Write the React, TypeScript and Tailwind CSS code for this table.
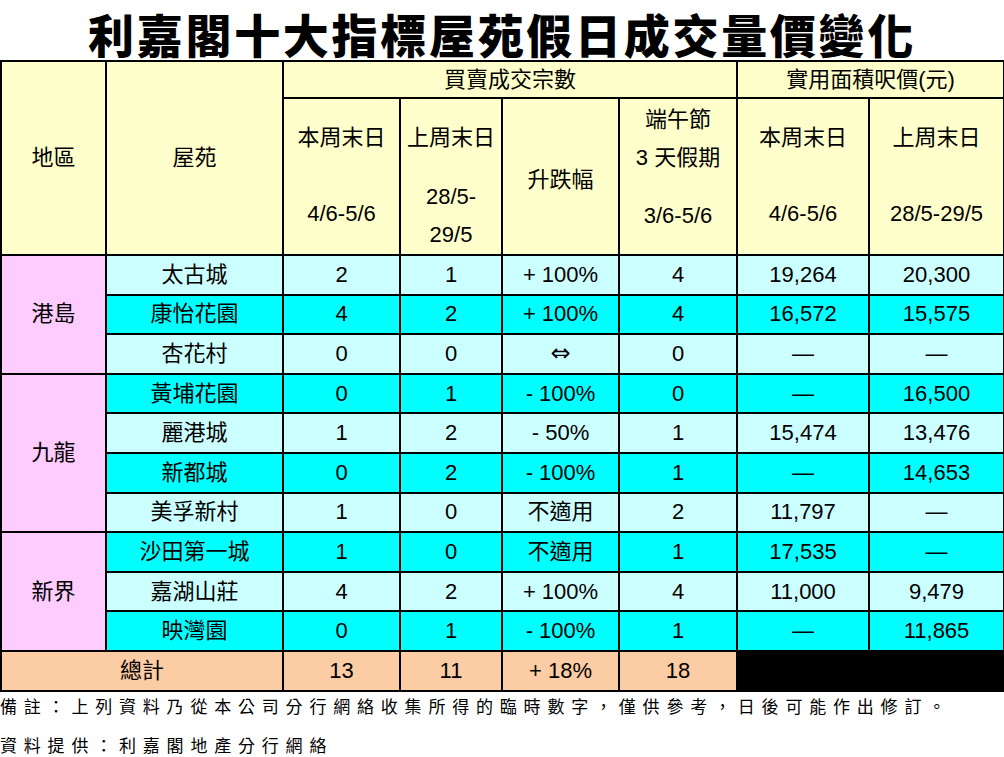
import React from 'react';

type Row = {
  name: string;
  thisWeek: string;
  lastWeek: string;
  change: string;
  holiday: string;
  priceNow: string;
  pricePrev: string;
};

type Region = {
  region: string;
  rows: Row[];
};

const regions: Region[] = [
  {
    region: '港島',
    rows: [
      { name: '太古城', thisWeek: '2', lastWeek: '1', change: '+ 100%', holiday: '4', priceNow: '19,264', pricePrev: '20,300' },
      { name: '康怡花園', thisWeek: '4', lastWeek: '2', change: '+ 100%', holiday: '4', priceNow: '16,572', pricePrev: '15,575' },
      { name: '杏花村', thisWeek: '0', lastWeek: '0', change: '⇔', holiday: '0', priceNow: '—', pricePrev: '—' },
    ],
  },
  {
    region: '九龍',
    rows: [
      { name: '黃埔花園', thisWeek: '0', lastWeek: '1', change: '- 100%', holiday: '0', priceNow: '—', pricePrev: '16,500' },
      { name: '麗港城', thisWeek: '1', lastWeek: '2', change: '- 50%', holiday: '1', priceNow: '15,474', pricePrev: '13,476' },
      { name: '新都城', thisWeek: '0', lastWeek: '2', change: '- 100%', holiday: '1', priceNow: '—', pricePrev: '14,653' },
      { name: '美孚新村', thisWeek: '1', lastWeek: '0', change: '不適用', holiday: '2', priceNow: '11,797', pricePrev: '—' },
    ],
  },
  {
    region: '新界',
    rows: [
      { name: '沙田第一城', thisWeek: '1', lastWeek: '0', change: '不適用', holiday: '1', priceNow: '17,535', pricePrev: '—' },
      { name: '嘉湖山莊', thisWeek: '4', lastWeek: '2', change: '+ 100%', holiday: '4', priceNow: '11,000', pricePrev: '9,479' },
      { name: '映灣園', thisWeek: '0', lastWeek: '1', change: '- 100%', holiday: '1', priceNow: '—', pricePrev: '11,865' },
    ],
  },
];

const cell = 'border-2 border-black text-center align-middle p-0';
const font = { fontFamily: '"Liberation Sans", "Noto Sans CJK TC", sans-serif' };

const ChangeText = ({ value }: { value: string }) =>
  value === '⇔' ? (
    <span className="text-[24px]" style={{ fontFamily: '"DejaVu Sans", sans-serif' }}>⇔</span>
  ) : (
    <>{value}</>
  );

const App = () => {
  let rowIndex = 0;

  return (
    <div className="w-[1004px] h-[757px] bg-white text-black overflow-hidden" style={font}>
      {/* Title */}
      <div
        className="h-[60px] text-center text-[46px] font-black leading-[66px] tracking-[2.7px] whitespace-nowrap"
        style={{ fontFamily: '"Noto Sans CJK TC", sans-serif' }}
      >
        利嘉閣十大指標屋苑假日成交量價變化
      </div>

      <table className="table-fixed border-collapse w-[1003px] text-[22px] leading-[34px]">
        <colgroup>
          <col className="w-[105px]" />
          <col className="w-[177px]" />
          <col className="w-[117px]" />
          <col className="w-[102px]" />
          <col className="w-[117px]" />
          <col className="w-[118px]" />
          <col className="w-[132px]" />
          <col className="w-[135px]" />
        </colgroup>
        <thead>
          <tr className="h-[37px] bg-[#ffffcc]">
            <th rowSpan={2} className={`${cell} font-normal`}>地區</th>
            <th rowSpan={2} className={`${cell} font-normal`}>屋苑</th>
            <th colSpan={4} className={`${cell} font-normal`}>買賣成交宗數</th>
            <th colSpan={2} className={`${cell} font-normal`}>實用面積呎價(元)</th>
          </tr>
          <tr className="h-[152px] bg-[#ffffcc]">
            <th className={`${cell} font-normal align-top`}>
              <div className="flex flex-col items-center pt-[20px] leading-[38px]">
                <div>本周末日</div>
                <div className="h-[38px]" />
                <div>4/6-5/6</div>
              </div>
            </th>
            <th className={`${cell} font-normal align-top`}>
              <div className="flex flex-col items-center pt-[20px] leading-[38px]">
                <div>上周末日</div>
                <div className="h-[21px]" />
                <div>28/5-</div>
                <div>29/5</div>
              </div>
            </th>
            <th className={`${cell} font-normal`}>
              <div className="pt-[6px]">升跌幅</div>
            </th>
            <th className={`${cell} font-normal align-top`}>
              <div className="flex flex-col items-center pt-[2px] leading-[38px]">
                <div>端午節</div>
                <div>3 天假期</div>
                <div className="h-[20px]" />
                <div>3/6-5/6</div>
              </div>
            </th>
            <th className={`${cell} font-normal align-top`}>
              <div className="flex flex-col items-center pt-[20px] leading-[38px]">
                <div>本周末日</div>
                <div className="h-[38px]" />
                <div>4/6-5/6</div>
              </div>
            </th>
            <th className={`${cell} font-normal align-top`}>
              <div className="flex flex-col items-center pt-[20px] leading-[38px]">
                <div>上周末日</div>
                <div className="h-[38px]" />
                <div>28/5-29/5</div>
              </div>
            </th>
          </tr>
        </thead>
        <tbody>
          {regions.map((group) =>
            group.rows.map((row, i) => {
              const bg = rowIndex++ % 2 === 0 ? 'bg-[#ccffff]' : 'bg-[#00ffff]';
              return (
                <tr key={row.name} className={`h-[39.6px] ${bg}`}>
                  {i === 0 && (
                    <td rowSpan={group.rows.length} className={`${cell} bg-[#ffccff]`}>
                      {group.region}
                    </td>
                  )}
                  <td className={cell}>{row.name}</td>
                  <td className={cell}>{row.thisWeek}</td>
                  <td className={cell}>{row.lastWeek}</td>
                  <td className={cell}><ChangeText value={row.change} /></td>
                  <td className={cell}>{row.holiday}</td>
                  <td className={cell}>{row.priceNow}</td>
                  <td className={cell}>{row.pricePrev}</td>
                </tr>
              );
            })
          )}
          <tr className="h-[39.6px] bg-[#fccca4]">
            <td colSpan={2} className={cell}>總計</td>
            <td className={cell}>13</td>
            <td className={cell}>11</td>
            <td className={cell}>+ 18%</td>
            <td className={cell}>18</td>
            <td colSpan={2} className={`${cell} bg-black`} />
          </tr>
        </tbody>
      </table>

      {/* Notes */}
      <div
        className="text-[17px] font-normal leading-[28px] tracking-[6.8px] whitespace-nowrap"
        style={{ fontFamily: '"Noto Sans CJK TC", sans-serif' }}
      >
        <div>備註：上列資料乃從本公司分行網絡收集所得的臨時數字，僅供參考，日後可能作出修訂。</div>
        <div className="mt-[11px]">資料提供：利嘉閣地產分行網絡</div>
      </div>
    </div>
  );
};

export default App;
